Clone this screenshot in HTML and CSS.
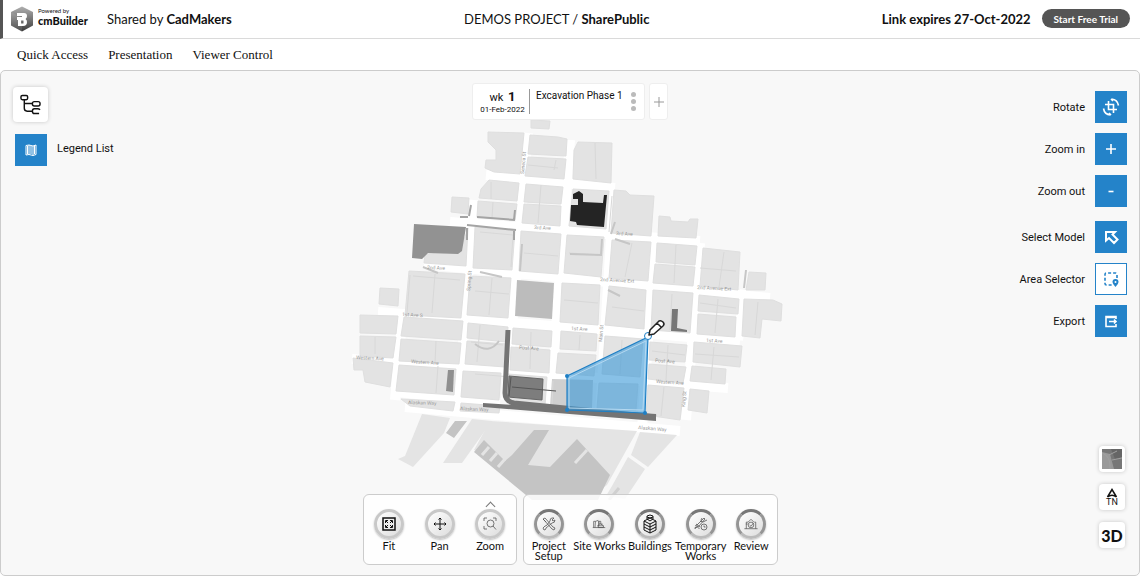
FILE: index.html
```
<!DOCTYPE html>
<html lang="en">
<head>
    <meta charset="UTF-8">
    <meta name="viewport" content="width=device-width, initial-scale=1.0">
    <title>cmBuilder - SharePublic</title>
    <link rel="stylesheet" href="styles.css">
</head>
<body>
    <header class="header">
        <div class="brand">
            <svg class="brand-mark" viewBox="0 0 24 26">
                <defs>
                    <linearGradient id="hex" x1="0" y1="0" x2="0" y2="1">
                        <stop offset="0" stop-color="#b0b0b0"/>
                        <stop offset="1" stop-color="#3c3c3c"/>
                    </linearGradient>
                </defs>
                <path d="M12 0.5 23 6v13.5L12 25.5 1 19.500V6z" fill="url(#hex)"/>
                <path d="M1 6 12 12v13.500L1 19.500z" fill="#fff" opacity=".1"/>
                <path d="M7 7h7q3 0 3 3 0 2-1.500 3 1.500 1 1.500 3 0 4-4 4H8v-6H7v-3h5V10H7zM11 14.500v3h2.500v-3z" fill="#fff" fill-rule="evenodd"/>
            </svg>
            <div class="brand-text">
                <span class="powered">Powered by</span>
                <span class="brand-name">cmBuilder</span>
            </div>
            <span class="shared">Shared by <b>CadMakers</b></span>
        </div>
        <div class="project">DEMOS PROJECT / <b>SharePublic</b></div>
        <div class="trial">
            <b>Link expires 27-Oct-2022</b>
            <button class="trial-btn">Start Free Trial</button>
        </div>
    </header>

    <nav class="menu">
        <a href="#">Quick Access</a>
        <a href="#">Presentation</a>
        <a href="#">Viewer Control</a>
    </nav>

    <main class="viewer">
        <svg class="map" viewBox="350 118 440 382">
            <!-- roads -->
            <path class="road" d="M486 175 615 188M450 222 700 241M424 264 770 298M378 312 740 341M352 359 728 388M398 392 500 403M405 407 680 431M528 133 506 400M570 140 550 410M614 190 600 415M655 236 642 430M700 243 686 420M745 290 738 340M474 200 458 410M403 310 395 400"/>
            <!-- city blocks -->
            <g class="blocks">
                <path d="M531 120 550 121 549 129 531 128z"/>
                <path d="M488 132 524 133 520 174 494 172 485 168 486 160 496 160 496 150 488 142z"/>
                <path d="M530 135 558 137 567 139 566 156 528 154z"/>
                <path d="M528 157 566 159 564 179 525 176z"/>
                <path d="M489 180 519 183 517 201 479 198 481 189z"/>
                <path d="M478 201 517 204 515 220 477 217z"/>
                <path d="M526 184 563 187 561 204 524 202z"/>
                <path d="M524 204 561 206 560 226 522 223z"/>
                <path d="M452 197 469 198 468 214 451 212z"/>
                <path d="M425 254 460 252 468 228 466 266 424 263z"/>
                <path d="M475 227 515 230 512 270 473 268z"/>
                <path d="M521 231 561 234 558 274 519 271z"/>
                <path d="M409 271 465 274 461 318 405 315z"/>
                <path d="M380 288 399 289 398 306 379 304z"/>
                <path d="M470 276 511 278 508 318 467 315z"/>
                <path d="M578 142 612 143 611 183 573 179 574 150z"/>
                <path d="M573 189 609 191 606 229 569 226z"/>
                <path d="M614 190 626 191 630 195 654 196 651 236 611 233z"/>
                <path d="M659 216 670 217 671 221 688 222 690 219 698 219 696 238 658 236z"/>
                <path d="M567 235 604 237 601 277 564 273z"/>
                <path d="M612 240 651 242 648 281 609 278z"/>
                <path d="M657 243 697 246 695 265 656 262z"/>
                <path d="M655 264 695 267 693 286 653 283z"/>
                <path d="M703 248 740 252 738 290 700 286z"/>
                <path d="M749 272 766 273 765 290 746 290z"/>
                <path d="M562 283 600 285 598 325 560 322z"/>
                <path d="M609 286 646 290 644 329 605 325z"/>
                <path d="M653 290 693 293 690 333 651 330z"/>
                <path d="M699 295 739 299 738 314 698 311z"/>
                <path d="M698 314 736 317 735 337 697 334z"/>
                <path d="M744 299 773 300 782 304 781 321 762 319 760 338 742 336z"/>
                <path d="M360 315 398 316 396 334 360 333z"/>
                <path d="M404 317 463 321 461 340 401 336z"/>
                <path d="M360 336 396 337 393 358 360 356z"/>
                <path d="M401 339 461 343 459 364 399 361z"/>
                <path d="M468 323 508 327 507 342 467 338z"/>
                <path d="M467 341 507 344 505 367 465 364z"/>
                <path d="M513 328 552 331 551 347 512 344z"/>
                <path d="M511 347 550 350 549 373 510 370z"/>
                <path d="M353 358 393 363 390 387 365 382 363 370 354 370z"/>
                <path d="M399 365 456 369 454 395 396 391z"/>
                <path d="M463 371 501 373 499 400 461 397z"/>
                <path d="M508 374 547 377 545 405 506 402z"/>
                <path d="M401 399 455 402 453 411 410 406z"/>
                <path d="M461 403 500 406 499 413 460 411z"/>
                <path d="M561 331 597 334 596 351 560 349z"/>
                <path d="M558 353 596 355 594 376 556 373z"/>
                <path d="M605 336 643 339 640 377 602 374z"/>
                <path d="M599 383 638 384 636 410 597 408z"/>
                <path d="M650 342 687 345 685 362 649 360z"/>
                <path d="M649 364 686 367 683 383 648 379z"/>
                <path d="M694 342 742 346 740 367 693 362z"/>
                <path d="M692 366 726 369 725 384 690 381z"/>
                <path d="M648 385 684 388 680 420 646 415z"/>
                <path d="M690 389 709 391 707 413 688 410z"/>
            </g>
            <path fill="#cfcfcf" d="M552 379 593 380 592 408 550 406z"/>
            <!-- piers and water -->
            <g class="pier">
                <path d="M422 414 450 418 444 433 413 467 398 459 405 456z"/>
                <path d="M472 419 492 421 462 463 443 463z"/>
                <path d="M490 421 637 431 607 485 590 497 570 494 474 450z"/>
                <path d="M640 432 677 435 648 467 631 455z"/>
                <path d="M628 457 645 469 625 499 606 496 612 486z"/>
            </g>
            <path fill="#c4c4c4" d="M455 421 467 421 454 438 446 433zM474 452 484 440 505 461 512 455 534 430 549 430 528 465 550 467 577 439 610 475 598 500 532 500z"/>
            <path class="slips" d="M482 455 489 447M490 461 497 453M498 467 505 459M575 463 587 450M493 438 499 434"/>
            <path stroke="#d0d0d0" stroke-width="3" d="M609 500 619 488"/>

            <!-- plot lines and shadows -->
            <path class="detail" d="M491 182v17M493 202l-1 16M541 185l-3 38M595 143l1 36M528 165l30 3M556 160l-2 10M569 253l33 2M612 196l-3 36M632 243l-7 34M676 245l-2 38M724 252l-5 35M700 268l36 3M480 232l33 3-2 32M524 253l34 3M413 276l47 4M435 274l-3 39M475 291l34 3M492 278l-3 37M564 300l34 3M612 307l32 4M672 294l-2 36M718 299l-3 34M700 303l36 5M758 302l-3 33M375 337v17M436 341l-1 22M480 325l-3 37M531 332l-1 37M438 366l-2 27M475 374l36 3M580 335l-1 15M622 340l-2 34M668 345l-2 35M652 351l33 4M714 347l-3 33M695 354l44 3M664 387l-3 29M410 275l-3 38M471 342l32 3M553 381l-1 24"/>
            <path class="shadow" d="M570 254l31 1 1-16M522 244l-2 27M499 341q-10 14-24 3M608 290l12 6M615 239l15 5M423 267l15 6M480 272l22 5M611 234l4-12M746 270l-2 18"/>
            <path class="shadow dark" d="M477 217l38 3M467 225l49 5M515 210l-1 10M514 231v9M467 228v12M471 205l-2 11M460 217h8"/>

            <path fill="#929292" d="M414 224 466 227 462 251 458 254 428 253 422 259 412 258z"/>
            <path fill="#bcbcbc" d="M517 280 554 283 552 319 515 316z"/>
            <path fill="#8f8f8f" d="M448 370 454 370 453 392 446 391z"/>
            <path fill="#242424" d="M573 194 579 191 583 194 583 202 603 203 604 195 607 195 604 227 577 225 576 222 570 221 571 205 578 205 578 199 573 199z"/>
            <path fill="#777" d="M672 309 678 309 677 328 687 330 687 332 671 331z"/>
            <path fill="#7d7d7d" stroke="#666" d="M509 376 543 379 542 400 508 397z"/>
            <path stroke="#555" d="M512 387 556 391M511 377 509 396"/>
            <path fill="none" stroke="#747474" stroke-width="5" d="M508 330 505 393Q505 401 514 403L656 417"/>
            <path fill="#747474" d="M483 403 656 414 656 421 483 407z"/>

            <g class="street">
                <text x="427" y="269" transform="rotate(3 427 269)">2nd Ave</text>
                <text x="534" y="229" transform="rotate(3 534 229)">3rd Ave</text>
                <text x="616" y="235" transform="rotate(3 616 235)">3rd Ave</text>
                <text x="402" y="316" transform="rotate(3 402 316)">1st Ave S</text>
                <text x="571" y="330" transform="rotate(3 571 330)">1st Ave</text>
                <text x="706" y="342" transform="rotate(3 706 342)">1st Ave</text>
                <text x="356" y="359" transform="rotate(3 356 359)">Western Ave</text>
                <text x="411" y="363" transform="rotate(4 411 363)">Western Ave</text>
                <text x="656" y="383" transform="rotate(4 656 383)">Western Ave</text>
                <text x="519" y="349" transform="rotate(4 519 349)">Post Ave</text>
                <text x="655" y="362" transform="rotate(4 655 362)">Post Ave</text>
                <text x="408" y="404" transform="rotate(2 408 404)">Alaskan Way</text>
                <text x="460" y="410" transform="rotate(3 460 410)">Alaskan Way</text>
                <text x="638" y="429" transform="rotate(5 638 429)">Alaskan Way</text>
                <text x="600" y="281" transform="rotate(3 600 281)">2nd Avenue Ext</text>
                <text x="697" y="289" transform="rotate(3 697 289)">2nd Avenue Ext</text>
                <text x="470" y="291" transform="rotate(-85 470 291)">Spring St</text>
                <text x="524" y="174" transform="rotate(-85 524 174)">Seneca St</text>
                <text x="602" y="342" transform="rotate(-85 602 342)">Main St</text>
                <text x="685" y="407" transform="rotate(-85 685 407)">King St</text>
            </g>

            <!-- selected area -->
            <path fill="#3998d7" fill-opacity=".6" stroke="#1e7fc5" stroke-width="1.200" d="M567 376 648 337 645 413 567 410z"/>
            <path fill="none" stroke="#b5d9f1" d="M569 378 646 341 643 410 569 408z"/>
            <g fill="#1e7fc5"><circle cx="567" cy="376" r="2"/><circle cx="567" cy="410" r="2"/><circle cx="645" cy="413" r="2"/></g>
            <circle cx="648" cy="336" r="3.500" fill="#fff" stroke="#1e7fc5"/>
            <path fill="#fff" stroke="#222" stroke-width="1.500" stroke-linejoin="round" d="M649 335 650 330 659 321Q661 320 663 322 665 324 663 326L654 334zM657 323l4 4"/>
        </svg>

        <div class="left-tools">
            <button class="tile tree" aria-label="Model tree">
                <svg viewBox="0 0 22 22"><rect x="1" y="1.500" width="7" height="4.500" rx="1.500"/><rect x="13" y="8" width="8" height="4.500" rx="2"/><path d="M4.500 6v9q0 3 3 3H13M4.500 10H13M21 16.500q-1-1-2.500-1H15q-2 0-2 2.500t2 2.500h5"/></svg>
            </button>
            <div class="legend">
                <button class="tool-btn" id="legend">
                    <svg viewBox="0 0 18 18"><path d="M4 4.500 7 4v9.500L4 14zM7 4l4 1v9.500l-4-1M11 5l3-1v9.500l-3 1M5.500 5v8M9 5v8M12.500 5v8"/></svg>
                </button>
                <label for="legend">Legend List</label>
            </div>
        </div>

        <div class="timeline">
            <div class="phase">
                <div class="week">
                    <span>wk <b>1</b></span>
                    <small>01-Feb-2022</small>
                </div>
                <span class="phase-name">Excavation Phase 1</span>
                <button class="dots" aria-label="More"><i></i><i></i><i></i></button>
            </div>
            <button class="add" aria-label="Add phase">
                <svg viewBox="0 0 10 10"><path d="M5 0v10M0 5h10"/></svg>
            </button>
        </div>

        <div class="right-tools">
            <div class="tool">
                <label for="rotate">Rotate</label>
                <button class="tool-btn" id="rotate">
                    <svg viewBox="0 0 18 18"><path d="M6.500 3v8.500H15M3 6.500h8.500V15M9.500 1q6 .5 7 6.500M8.500 17q-6-.5-7-6.500M9 1l2 2M9 17l-2-2"/></svg>
                </button>
            </div>
            <div class="tool">
                <label for="zoomIn">Zoom in</label>
                <button class="tool-btn" id="zoomIn"><svg viewBox="0 0 18 18"><path d="M9 4v10M4 9h10"/></svg></button>
            </div>
            <div class="tool">
                <label for="zoomOut">Zoom out</label>
                <button class="tool-btn" id="zoomOut"><svg viewBox="0 0 18 18"><path d="M6.500 9.500h5"/></svg></button>
            </div>
            <div class="tool second">
                <label for="select">Select Model</label>
                <button class="tool-btn" id="select"><svg viewBox="0 0 18 18"><path stroke-width="2" d="M4 4h9l-2.500 2.500 5 5-3.500 3.500-5-5L4 12.500z"/></svg></button>
            </div>
            <div class="tool">
                <label for="area">Area Selector</label>
                <button class="tool-btn active" id="area">
                    <svg viewBox="0 0 18 18"><path stroke-dasharray="3 2" d="M15 8V4.500Q15 3 13.500 3h-9Q3 3 3 4.500v9Q3 15 4.500 15H10"/><path fill="#2483c9" stroke="none" d="M13.500 9q3 0 3 3 0 2-3 5-3-3-3-5 0-3 3-3z"/><circle cx="13.500" cy="12" r="1" fill="#fff" stroke="none"/></svg>
                </button>
            </div>
            <div class="tool">
                <label for="export">Export</label>
                <button class="tool-btn" id="export">
                    <svg viewBox="0 0 18 18"><path d="M14 7V4.500H4v10h10V12M4 5.500h10M7 9.500h7M12 7.500l2 2-2 2"/></svg>
                </button>
            </div>
            <div class="view-tools">
                <button class="tile" aria-label="Base map">
                    <svg class="satellite" viewBox="0 0 20 20"><rect width="20" height="20" fill="#777"/><path fill="#999" d="M0 3 8 5 12 20H0z"/><path fill="#666" d="M9 0h11v8l-7 2z"/><path class="satellite-road" d="M0 4q9 3 8 16M7 6l8-4M10 11l10-2"/></svg>
                </button>
                <button class="tile north">
                    <svg viewBox="0 0 12 10"><path d="M1.500 9 6 1.500 10.500 9Q6 5.500 1.500 9z"/></svg>
                    TN
                </button>
                <button class="tile three-d">3D</button>
            </div>
        </div>

        <div class="toolbars">
            <div class="toolbar">
                <button class="round-tool">
                    <span class="round"><svg viewBox="0 0 16 16"><rect x="2" y="2" width="12" height="12" stroke-width="1.500"/><path d="M4.500 7V4.500H7M9 4.500h2.500V7M11.500 9v2.500H9M7 11.500H4.500V9M5 5l2 2M11 5 9 7M11 11 9 9M5 11l2-2"/></svg></span>
                    Fit
                </button>
                <button class="round-tool">
                    <span class="round"><svg viewBox="0 0 16 16"><path d="M8 2v12M2 8h12M6.500 3.500 8 2l1.500 1.500M6.500 12.500 8 14l1.500-1.500M3.500 6.500 2 8l1.500 1.500M12.500 6.500 14 8l-1.500 1.500"/></svg></span>
                    Pan
                </button>
                <button class="round-tool has-more">
                    <span class="round thin"><svg viewBox="0 0 16 16"><circle cx="8.500" cy="7.500" r="3.500"/><path d="M2 5V2h3M11 2h3v3M2 10v3h3M11 10l3 3.500"/></svg></span>
                    Zoom
                </button>
            </div>
            <div class="toolbar works">
                <button class="round-tool">
                    <span class="round thin"><svg viewBox="0 0 16 16"><path d="M2 3l2-1 8 9 2 1-1 2-2-1-8-9zM13 2l-2 2 1 1 2-1q0 3-3 3l-6 5q0 2-2 2l-1-2 2-2q1 0 2-1l3-4q0-3 2-3zM2 3l3 3"/></svg></span>
                    Project Setup
                </button>
                <button class="round-tool">
                    <span class="round thin"><svg viewBox="0 0 18 16"><path d="M3 12V5h2L4.500 12M5 5l3-1 1 3v3H7M9 5h2v3l3 2v2H8zM9 8h4M8 10h6M2 12h14"/></svg></span>
                    Site&nbsp;Works
                </button>
                <button class="round-tool tall-icon">
                    <span class="round"><svg viewBox="0 0 16 20"><path d="M2 7l6 3 6-3v3l-6 3-6-3zM2 10v3l6 3 6-3v-3M2 13v3l6 3 6-3v-3M2 7l6-3 6 3M5 5V2l3-1 3 1v3L8 7zM5 3l3 1 3-1M8 10v9"/></svg></span>
                    Buildings
                </button>
                <button class="round-tool">
                    <span class="round thin"><svg viewBox="0 0 16 16"><circle cx="11" cy="11" r="3"/><path d="M11 9.500V11h1.500M2 10l2-1 7-7 1 1-6 7-3 1-1 2M3 8l4 3M7 5l3 1 4-2M8 4l1-2M1.500 12l3-1 2 2"/></svg></span>
                    Temporary Works
                </button>
                <button class="round-tool">
                    <span class="round thin"><svg viewBox="0 0 17 16"><path d="M1.500 13h14M3.500 13V6h2M12 6h1.500v7M5.500 6l3-3 3 3M3 8h2"/><circle cx="8.500" cy="9" r="3"/><path d="M7 9l1.500 1.500L11 7"/></svg></span>
                    Review
                </button>
            </div>
        </div>
    </main>
</body>
</html>
```
FILE: styles.css
```
* {
    box-sizing: border-box;
}
body {
    margin: 0;
    min-height: 100vh;
    display: flex;
    flex-direction: column;
    background: #fff;
    color: #111;
    font-family: Lato, sans-serif;
}
button {
    padding: 0;
    border: none;
    background: none;
    color: inherit;
    font-family: inherit;
    cursor: pointer;
}
svg {
    display: block;
}
button svg {
    fill: none;
    stroke: currentColor;
}

/* header */
.header {
    display: flex;
    justify-content: space-between;
    align-items: center;
    height: 39px;
    padding: 0 10px 1px 7px;
    border-left: 3px solid #555;
    border-bottom: 1px solid #dadada;
    font-size: 13px;
}
.brand, .trial {
    display: flex;
    align-items: center;
}
.brand-mark {
    width: 24px;
    height: 26px;
}
.brand-text {
    display: flex;
    flex-direction: column;
    width: 54px;
    margin: 0 15px 4px 4px;
}
.powered {
    font-size: 6px;
    line-height: 8px;
}
.brand-name {
    font-size: 11px;
    line-height: 11px;
    font-weight: 900;
}
.trial {
    gap: 11px;
}
.trial-btn {
    height: 19px;
    padding: 0 12px;
    border-radius: 10px;
    background: #555;
    color: #fff;
    font-size: 10px;
    font-weight: bold;
}

.menu {
    display: flex;
    align-items: center;
    gap: 20px;
    height: 31px;
    padding-left: 17px;
}
.menu a {
    color: #111;
    font-family: "Liberation Serif", serif;
    font-size: 13px;
    text-decoration: none;
}

/* viewer */
.viewer {
    flex: 1;
    display: grid;
    grid-template-columns: 1fr auto 1fr;
    grid-template-rows: auto 1fr auto;
    border: 1px solid #ccc;
    border-radius: 5px;
    background: #f8f8f8;
    font-family: Roboto, sans-serif;
    font-size: 11px;
}
.map {
    grid-area: 1 / 1 / -1 / -1;
    justify-self: center;
    width: 440px;
    margin-top: 47px;
}
.road {
    fill: none;
    stroke: #fff;
    stroke-width: 10px;
}
.blocks {
    fill: #e3e3e3;
    stroke: #dfdfdf;
}
.pier {
    fill: #e4e4e4;
}
.slips {
    fill: none;
    stroke: #e4e4e4;
    stroke-width: 3px;
}
.detail {
    fill: none;
    stroke: #d8d8d8;
}
.shadow {
    fill: none;
    stroke: #c6c6c6;
    stroke-width: 2px;
}
.dark {
    stroke: #a4a4a4;
}
.street {
    fill: #999;
    font-size: 5px;
}

.left-tools {
    grid-area: 1 / 1 / -1 / 2;
    display: flex;
    flex-direction: column;
    align-items: flex-start;
    gap: 12px;
    padding: 16px 12px;
}
.tile {
    width: 26px;
    height: 26px;
    display: flex;
    flex-direction: column;
    align-items: center;
    justify-content: center;
    border-radius: 4px;
    background: #fff;
    box-shadow: 0 0 4px rgba(0, 0, 0, .2);
}
.tree {
    width: 35px;
    height: 35px;
}
.tree svg {
    width: 21px;
    height: 21px;
    stroke-width: 1.5px;
}
.legend, .tool {
    display: flex;
    align-items: center;
    gap: 10px;
}
.legend {
    padding-left: 2px;
}
.legend label {
    padding-bottom: 3px;
}
.tool-btn {
    width: 32px;
    height: 32px;
    display: flex;
    align-items: center;
    justify-content: center;
    background: #2483c9;
    color: #fff;
}
.tool-btn svg {
    width: 18px;
    height: 18px;
    stroke-width: 1.6px;
}
.legend svg {
    stroke-width: 1px;
}
.tool-btn.active {
    border: 1px solid #2483c9;
    background: #fff;
    color: #2483c9;
}

.timeline {
    grid-area: 1 / 2;
    justify-self: center;
    display: flex;
    gap: 4px;
    height: 37px;
    margin-top: 12px;
}
.phase {
    display: flex;
    width: 173px;
    padding: 5px 6px;
    border: 1px solid #eee;
    border-radius: 3px;
    background: #fff;
}
.week {
    width: 51px;
    display: flex;
    flex-direction: column;
    align-items: center;
    padding-right: 3px;
    border-right: 1px solid #999;
    line-height: 15px;
}
.week b {
    margin-left: 2px;
    font-size: 13px;
}
.week small {
    font-size: 8px;
    line-height: 10px;
}
.phase-name {
    flex: 1;
    padding-left: 6px;
    font-size: 10px;
    line-height: 14px;
    white-space: nowrap;
}
.dots {
    display: flex;
    flex-direction: column;
    justify-content: center;
    gap: 2px;
    margin-right: 2px;
}
.dots i {
    width: 5px;
    height: 5px;
    border-radius: 50%;
    background: #bbb;
}
.add {
    width: 19px;
    display: flex;
    align-items: center;
    justify-content: center;
    border: 1px solid #eee;
    border-radius: 3px;
    background: #fff;
    color: #999;
}
.add svg {
    width: 10px;
    height: 10px;
}

.right-tools {
    grid-area: 1 / 3 / -1 / 4;
    display: flex;
    flex-direction: column;
    align-items: flex-end;
    gap: 10px;
    padding: 20px 12px 27px;
}
.second {
    margin-top: 4px;
}
.view-tools {
    display: flex;
    flex-direction: column;
    gap: 12px;
    margin: auto 2px 0 0;
}
.satellite {
    width: 20px;
    height: 20px;
    stroke: none;
}
.satellite-road {
    stroke: #a0a0a0;
}
.north {
    font-size: 9px;
    line-height: 9px;
}
.north svg {
    width: 12px;
    height: 10px;
    stroke-width: 1.5px;
}
.three-d {
    font-family: Lato, sans-serif;
    font-size: 16px;
    font-weight: 900;
}

/* bottom toolbars */
.toolbars {
    grid-area: 3 / 2;
    display: flex;
    gap: 6px;
    margin-bottom: 10px;
}
.toolbar {
    display: flex;
    width: 154px;
    height: 71px;
    border: 1px solid #ccc;
    border-radius: 6px;
    background: rgba(255, 255, 255, .85);
}
.toolbar.works {
    width: 255px;
}
.round-tool {
    position: relative;
    flex: 1;
    min-width: 0;
    display: flex;
    flex-direction: column;
    align-items: center;
    padding-top: 14px;
    font-family: Lato, sans-serif;
    font-size: 11px;
    line-height: 10px;
}
.round {
    width: 30px;
    height: 30px;
    display: flex;
    align-items: center;
    justify-content: center;
    flex-shrink: 0;
    margin-bottom: 2px;
    border: 3px solid #c8c8c8;
    border-radius: 50%;
    background: linear-gradient(135deg, #fff, #ddd);
    box-shadow: 0 1px 2px rgba(0, 0, 0, .25);
}
.round svg {
    width: 16px;
    height: 16px;
}
.thin svg {
    stroke: #555;
    stroke-width: .8px;
}
.works .round {
    border-color: #777 #959595 #bbb;
}
.tall-icon svg {
    height: 20px;
}
.has-more::before {
    content: "";
    position: absolute;
    top: 8px;
    left: 22px;
    width: 6px;
    height: 6px;
    border-top: 1px solid #777;
    border-left: 1px solid #777;
    transform: rotate(45deg);
}
```
